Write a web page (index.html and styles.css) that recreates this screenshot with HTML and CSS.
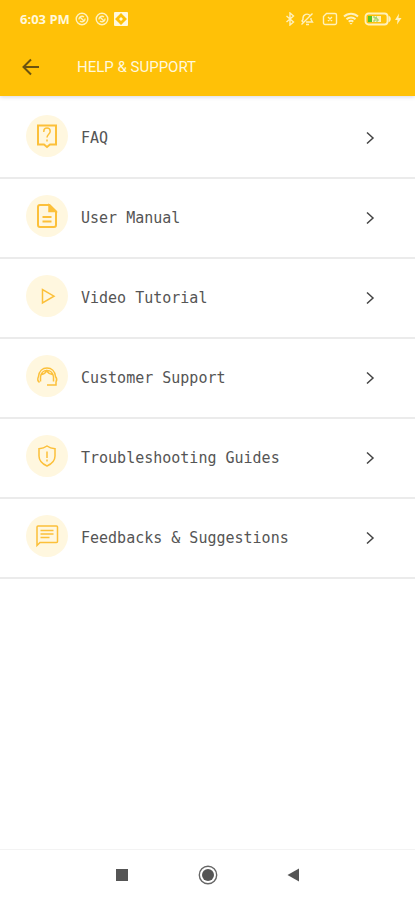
FILE: index.html
```html
<!DOCTYPE html>
<html lang="en">
<head>
<meta charset="utf-8">
<meta name="viewport" content="width=device-width, initial-scale=1">
<title>Help &amp; Support</title>
<link rel="stylesheet" href="styles.css">
</head>
<body>
<div class="screen">
  <header class="header">
    <div class="status">
      <span class="time">6:03 PM</span>
      <svg class="status-icon ring" width="14" height="14" viewBox="0 0 14 14"><circle cx="7" cy="7" r="5.800"/><path d="M4 7.500V7a3 3 0 0 1 5-2M10 6.500V7a3 3 0 0 1-5 2M5 5l4.500 4.500"/></svg>
      <svg class="status-icon" width="14" height="14" viewBox="0 0 14 14"><circle cx="7" cy="7" r="5.800"/><path d="M4 7.500V7a3 3 0 0 1 5-2M10 6.500V7a3 3 0 0 1-5 2M5 5l4.500 4.500"/></svg>
      <svg class="status-badge" width="14" height="14" viewBox="0 0 14 14"><rect width="14" height="14" rx="1" fill="#fff8dc"/><path d="M7 1l3 3-3 3-3-3zM7 7l3 3-3 3-3-3zM4 4l3 3-3 3-3-3zM10 4l3 3-3 3-3-3z" fill="#ffc107"/><path d="M7 5l2 2-2 2-2-2z" fill="#fff8dc"/></svg>
      <span class="spacer"></span>
      <svg class="status-icon" width="10" height="14" viewBox="0 0 10 14"><path d="M1.500 4l7 6L5 13V1l3.500 3-7 6"/></svg>
      <svg class="status-icon mute" width="14" height="14" viewBox="0 0 14 14"><path d="M3 10L2 9l1-1.500V6a4 4 0 0 1 7-2.500M11 6v1.500l1.500 2.500H6M6 12.500h3M1.500 12.500l11-11"/></svg>
      <svg class="status-icon" width="16" height="14" viewBox="0 0 16 14"><path d="M4.500 1.500H13a1.500 1.500 0 0 1 1.500 1.500v8a1.500 1.500 0 0 1-1.500 1.500H3A1.500 1.500 0 0 1 1.500 11V4.500zM6 5l4 4M10 5L6 9"/></svg>
      <svg class="status-icon wifi" width="16" height="14" viewBox="0 0 16 14"><path d="M1 4.500a10 10 0 0 1 14 0M3.500 7.200a6.500 6.500 0 0 1 9 0M5.800 9.800a3 3 0 0 1 4.400 0"/><path class="solid" d="M6.500 11h3L8 12.800z"/></svg>
      <svg class="battery" width="28" height="14" viewBox="0 0 28 14"><rect x="1.500" y="1.500" width="22" height="11" rx="3" fill="none" stroke="#fff1bd" stroke-width="1.800"/><path d="M24.500 3.500c3 1.500 3 5.500 0 7z" fill="#fff1bd"/><rect x="4" y="4" width="13" height="6" fill="#fff1bd"/><rect x="4" y="4" width="4" height="6" fill="#58c322"/><path d="M9 5h2v4H9M13 5h-1v2h2v2h-2" fill="none" stroke="#8fce5c"/></svg>
      <svg width="8" height="14" viewBox="0 0 8 14"><path d="M5 1.500L1 8h2.500L3 12.500 7.500 6H4.500z" fill="#fff1bd"/></svg>
    </div>
    <div class="toolbar">
      <button class="back" type="button" aria-label="Back"><svg width="20" height="18" viewBox="0 0 20 18"><path d="M18 9H3M10 1.500L2.500 9l7.500 7.500"/></svg></button>
      <h1 class="title">HELP &amp; SUPPORT</h1>
    </div>
  </header>

  <main class="list">
    <a class="row" href="#faq">
      <span class="disc"><svg width="24" height="26" viewBox="0 0 24 26"><path class="thick" d="M3 2.500h18v19h-6L12 24 9 21.500H3z"/><path d="M8.800 9V8.200a3.200 3.200 0 1 1 6.400 0c0 3-3.200 3-3.200 6.300M12 16.500v2"/></svg></span>
      <span class="label">FAQ</span>
      <svg class="chevron" width="10" height="14" viewBox="0 0 10 14"><path d="M2 1.500L8 7l-6 5.500"/></svg>
    </a>
    <a class="row" href="#manual">
      <span class="disc"><svg width="24" height="26" viewBox="0 0 24 26"><path class="thick" d="M5 2h9.500l6.500 6.500V22a2 2 0 0 1-2 2H5a2 2 0 0 1-2-2V4a2 2 0 0 1 2-2zM7.500 14h9M7.500 18.500h9"/><path class="fill" d="M14 2v6.500h7z"/></svg></span>
      <span class="label">User Manual</span>
      <svg class="chevron" width="10" height="14" viewBox="0 0 10 14"><path d="M2 1.500L8 7l-6 5.500"/></svg>
    </a>
    <a class="row" href="#video">
      <span class="disc"><svg width="24" height="26" viewBox="0 0 24 26"><path d="M7.500 6.500v13.500L19 13.200z"/></svg></span>
      <span class="label">Video Tutorial</span>
      <svg class="chevron" width="10" height="14" viewBox="0 0 10 14"><path d="M2 1.500L8 7l-6 5.500"/></svg>
    </a>
    <a class="row" href="#support">
      <span class="disc"><svg width="24" height="26" viewBox="0 0 24 26"><path d="M4.500 19.500c-2-1.500-2-4-1-6C4 8 7.500 5 12 5s8 3 8.500 8.500c1.300 1.500 1.300 4 .5 5.500V22h-9M5.500 18.500V14c.3-4 3-6.500 6.500-6.500s6.200 2.500 6.500 6.500v4.500M6.500 11.500c2.300-.3 4-1.500 5-3.500 1.500 2 3.500 3 6 3.500"/></svg></span>
      <span class="label">Customer Support</span>
      <svg class="chevron" width="10" height="14" viewBox="0 0 10 14"><path d="M2 1.500L8 7l-6 5.500"/></svg>
    </a>
    <a class="row" href="#guides">
      <span class="disc"><svg width="24" height="26" viewBox="0 0 24 26"><path d="M12 3c2.500 1.800 5 2.500 8 2.800V13c0 4.500-3.500 8-8 10-4.500-2-8-5.500-8-10V5.800C7 5.500 9.500 4.800 12 3zM12 8.500v6.500M12 16.500v2"/></svg></span>
      <span class="label">Troubleshooting Guides</span>
      <svg class="chevron" width="10" height="14" viewBox="0 0 10 14"><path d="M2 1.500L8 7l-6 5.500"/></svg>
    </a>
    <a class="row" href="#feedback">
      <span class="disc"><svg width="24" height="26" viewBox="0 0 24 26"><path d="M2 22.500V4a1 1 0 0 1 1-1h18.500a1 1 0 0 1 1 1v14.500a1 1 0 0 1-1 1H5zM5.500 7.500h13M5.500 11h13M5.500 14.500h9"/></svg></span>
      <span class="label">Feedbacks &amp; Suggestions</span>
      <svg class="chevron" width="10" height="14" viewBox="0 0 10 14"><path d="M2 1.500L8 7l-6 5.500"/></svg>
    </a>
  </main>

  <nav class="navbar" aria-label="System">
    <button type="button" aria-label="Recent apps"><svg width="20" height="20" viewBox="0 0 20 20"><rect x="4" y="4" width="12" height="12" fill="#555"/></svg></button>
    <button type="button" aria-label="Home"><svg width="20" height="20" viewBox="0 0 20 20"><circle cx="10" cy="10" r="8.700" fill="none" stroke="#666" stroke-width="1.400"/><circle cx="10" cy="10" r="6" fill="#555"/></svg></button>
    <button type="button" aria-label="Back"><svg width="20" height="20" viewBox="0 0 20 20"><path d="M15 3.500v13L3.500 10z" fill="#555"/></svg></button>
  </nav>
</div>
</body>
</html>
```
FILE: styles.css
```css
* {
  box-sizing: border-box;
}

body {
  margin: 0;
  background: #fff;
  font-family: Roboto, "Liberation Sans", sans-serif;
}

button {
  display: flex;
  padding: 0;
  border: 0;
  background: none;
}

svg {
  display: block;
  flex: none;
}

.screen {
  display: flex;
  flex-direction: column;
  min-height: 100vh;
}

.header {
  background: #ffc107;
  box-shadow: 0 1px 4px rgba(60, 60, 100, 0.2);
}

.status {
  display: flex;
  align-items: center;
  gap: 5px;
  height: 38px;
  padding: 0 13px 0 20px;
}

.time {
  color: #fff8dc;
  font-family: "Open Sans", sans-serif;
  font-size: 13px;
  font-weight: 700;
  line-height: 16px;
}

.spacer {
  flex: 1;
}

.status-icon {
  fill: none;
  stroke: #fff1bd;
  stroke-width: 1.4;
}

.mute {
  margin-right: 3px;
}

.wifi {
  stroke-width: 2;
}

.battery {
  margin-right: -3px;
}

.status-icon .solid {
  fill: #fff1bd;
  stroke: none;
}

.toolbar {
  display: flex;
  align-items: center;
  gap: 36px;
  height: 58px;
  padding: 0 21px;
}

.back svg {
  fill: none;
  stroke: #6b5310;
  stroke-width: 2;
}

.title {
  margin: 0;
  color: #fff8dc;
  font-size: 15px;
  font-weight: 400;
  line-height: 20px;
}

.list {
  flex: 1;
  padding-top: 3px;
}

.row {
  display: flex;
  align-items: center;
  height: 80px;
  padding: 0 40px 0 26px;
  border-bottom: 2px solid #ebebeb;
  color: #555;
  text-decoration: none;
}

.disc {
  display: grid;
  place-items: center;
  width: 42px;
  height: 42px;
  margin-bottom: 4px;
  border-radius: 50%;
  background: #fff7df;
}

.disc svg {
  fill: none;
  stroke: #fcc03a;
  stroke-width: 1.5;
}

.disc .thick {
  stroke-width: 2;
}

.disc .fill {
  fill: #fcc03a;
}

.label {
  flex: 1;
  padding-left: 13px;
  font-family: "DejaVu Sans Mono", monospace;
  font-size: 15px;
  line-height: 20px;
}

.chevron {
  fill: none;
  stroke: #444;
  stroke-width: 1.5;
}

.navbar {
  display: flex;
  align-items: center;
  justify-content: center;
  gap: 66px;
  height: 51px;
  border-top: 1px solid #f3f3f3;
}

.ring {
  margin-right: 1px;
}
```
